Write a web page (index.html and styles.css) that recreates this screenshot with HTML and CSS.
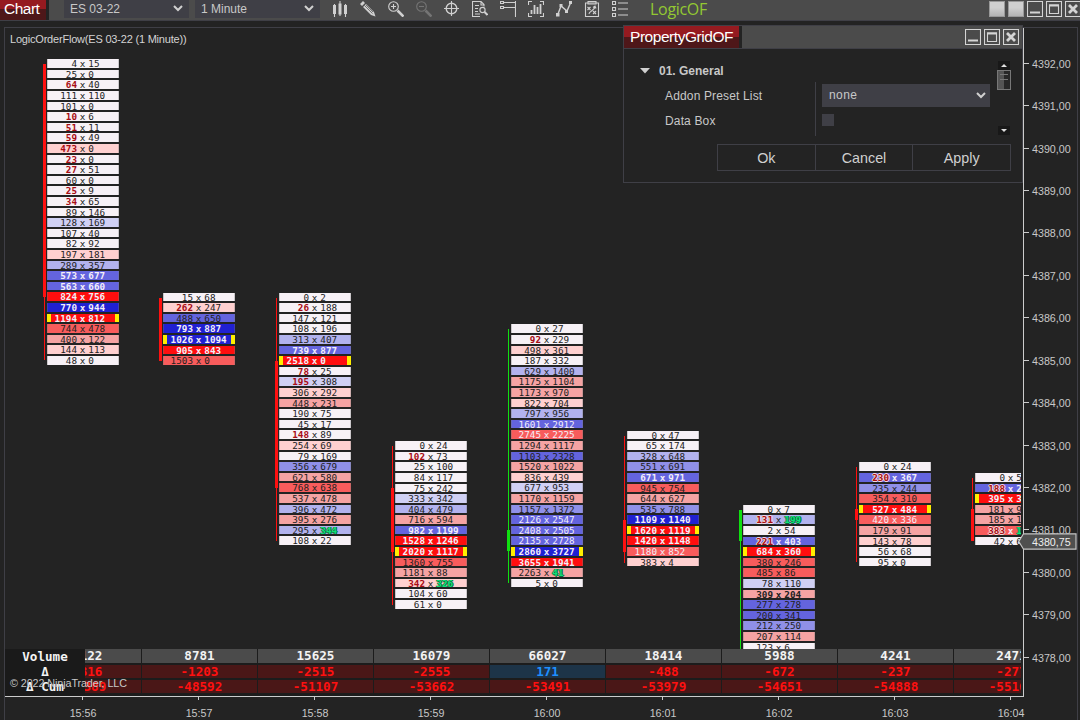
FILE: index.html
```html
<!DOCTYPE html>
<html lang="en">
<head>
<meta charset="utf-8">
<title>Chart</title>
<link rel="stylesheet" href="styles.css">
</head>
<body>
<header class="toolbar">
  <div class="tab tab-chart">Chart</div>
  <div class="tools">
    <div class="select"><span>ES 03-22</span><svg width="10" height="7" viewBox="0 0 10 7"><path d="M1 1l4 4 4-4" class="chev"/></svg></div>
    <div class="select"><span>1 Minute</span><svg width="10" height="7" viewBox="0 0 10 7"><path d="M1 1l4 4 4-4" class="chev"/></svg></div>
    <nav class="icons">
      <svg viewBox="0 0 16 16"><path class="f" d="M1 4h3v9H1zM6.500 2.500h3v11h-3zM12 4h3v9h-3z"/><path d="M2.500 3v13M8 0v15M13.500 3v13"/></svg>
      <svg viewBox="0 0 16 16"><path class="f" d="M0 3l3-3 2 2-3 3zM3 6l3-3 8 8 1.500 4.500L11 14z"/><path d="M4.500 4.500l8 8M6 4l7 7" stroke="#4b4b4b" stroke-width=".7"/></svg>
      <svg viewBox="0 0 16 16"><circle cx="5.500" cy="5.500" r="4.800"/><path d="M3 5.500h5M5.500 3v5"/><path d="M9.500 9.500l6 6" stroke-width="2.600"/></svg>
      <svg viewBox="0 0 16 16" class="off"><circle cx="5.500" cy="5.500" r="4.800"/><path d="M3 5.500h5"/><path d="M9.500 9.500l6 6" stroke-width="2.600"/></svg>
      <svg viewBox="0 0 16 16"><circle cx="7.500" cy="7.500" r="5.300" stroke-width="1.400"/><path d="M7.500 0v15M0 7.500h15"/></svg>
      <svg viewBox="0 0 16 16"><path d="M8 15.500H.5V.5H9l3 3v2M9 .5V4h3M3 4.500h4M3 7.500h3M3 10.500h3M3 13h5"/><circle cx="10.500" cy="9" r="2.600"/><path d="M12.500 11l3 3" stroke-width="2"/></svg>
      <svg viewBox="0 0 16 16"><path d="M.5.5h3v2h-3zM.5 5.500h3v2h-3zM3.500 1.500h12M3.500 6.500h12M15.500 0v16"/></svg>
      <svg viewBox="0 0 16 16"><path d="M4 .5H.5V4M12 .5h3.500V4M4 15.500H.5V12M12 15.500h3.500V12"/><path d="M3.500 9v4M6.500 4v9M9.500 6v7M12.500 3v10" stroke-width="1.800"/></svg>
      <svg viewBox="0 0 16 16"><path d="M2 13L5 5l6 5 3.500-8" stroke-width="1.400"/><path class="f" d="M0 12h3.500v3.500H0zM3.500 3h3v3h-3zM9 9h3v3H9zM13 0h3v3h-3z"/></svg>
      <svg viewBox="0 0 16 16"><path d="M1.500 2h13v13.500h-13z"/><path d="M4 .5h8V3H4zM3.500 6l3 3m0-3l-3 3M9 13l3-3m-3 0l3 3M5 13c0-3 5-3 6-7M9 6.500l2-1.500 1 2.500"/></svg>
      <svg viewBox="0 0 16 16"><path d="M.5.5h3v3h-3zM.5 6.500h3v3h-3zM.5 12.500h3v3h-3zM6 2h10M6 8h10M6 14h10"/></svg>
    </nav>
    <span class="logic">LogicOF</span>
    <div class="winbtns">
      <i class="blank"></i><i class="blank"></i>
      <svg viewBox="0 0 16 16"><path d="M.5.5h15v15H.5z"/><path d="M3 11.500h10" stroke-width="2"/></svg>
      <svg viewBox="0 0 16 16"><path d="M.5.5h15v15H.5zM3.500 4h9v8.500h-9z"/><path d="M3 4.500h10" stroke-width="2"/></svg>
      <svg viewBox="0 0 16 16"><path d="M.5.5h15v15H.5z"/><path d="M4 4l8 8m0-8l-8 8" stroke-width="2.800"/></svg>
    </div>
  </div>
</header>

<main class="frame">
  <section class="plot">
    <div class="indicator">LogicOrderFlow(ES 03-22 (1 Minute))</div>
    <div class="ladders" id="ladders"></div>
    <div class="summary">
      <div class="labels"><b>Volume</b><b>Δ</b><b>Δ Cum</b></div>
      <div class="cells" id="cells"></div>
    </div>
    <div class="copyright">© 2022 NinjaTrader, LLC</div>
  </section>
  <aside class="prices" id="prices"></aside>
  <footer class="times" id="times"></footer>
</main>

<div class="marker"><svg width="59" height="17" viewBox="0 0 59 17"><path d="M.8 8.500L5.500.8H58v15.400H5.500z"/></svg><span>4380,75</span></div>

<section class="dialog">
  <div class="dlg-head">
    <div class="tab tab-dlg">PropertyGridOF</div>
    <div class="dlg-bar">
      <svg viewBox="0 0 16 16"><path d="M.5.5h15v15H.5z"/><path d="M3 11.500h10" stroke-width="2"/></svg>
      <svg viewBox="0 0 16 16"><path d="M.5.5h15v15H.5zM3.500 4h9v8.500h-9z"/><path d="M3 4.500h10" stroke-width="2"/></svg>
      <svg viewBox="0 0 16 16"><path d="M.5.5h15v15H.5z"/><path d="M4 4l8 8m0-8l-8 8" stroke-width="2.800"/></svg>
    </div>
  </div>
  <div class="dlg-body">
    <div class="props">
      <h2><svg width="10" height="6" viewBox="0 0 10 6"><path d="M0 0h10L5 5.500z"/></svg>01. General</h2>
      <div class="prop"><label>Addon Preset List</label><div class="value"><div class="combo"><span>none</span><svg width="10" height="7" viewBox="0 0 10 7"><path d="M1 1l4 4 4-4" class="chev"/></svg></div></div></div>
      <div class="prop"><label>Data Box</label><div class="value"><i class="check"></i></div></div>
    </div>
    <div class="scroll"><i class="arrow up"></i><i class="thumb"></i><i class="arrow down"></i></div>
  </div>
  <div class="buttons"><button>Ok</button><button>Cancel</button><button>Apply</button></div>
</section>
<script src="chart.js"></script>
</body>
</html>
```
FILE: styles.css
```css
* { box-sizing: border-box; }
body {
  margin: 0; width: 1080px; height: 720px; overflow: hidden; position: relative;
  background: #232323; color: #c8c8c8; font-family: "Liberation Sans", Arial, sans-serif;
}
svg { display: block; flex: none; }
.chev { fill: none; stroke: #d0d0d0; stroke-width: 2; }

.toolbar { display: flex; gap: 3px; height: 21px; border-bottom: 1px solid #3f3f46; }
.tab { color: #fff; background: linear-gradient(#951a20 0 50%, #4e1719 50%); white-space: nowrap; }
.tab-chart { width: 46px; height: 20px; padding-left: 4px; font-size: 15.500px; letter-spacing: -.5px; line-height: 18px; background: linear-gradient(#951a20 0 9px, #4e1719 9px); }
.tools { flex: 1; display: flex; background: #4b4b4b; padding-left: 15px; }
.select {
  width: 125px; height: 18px; margin-right: 6px; padding: 0 6px 0 6px; background: #3f3f46;
  display: flex; align-items: center; justify-content: space-between; font-size: 12px;
}
.select svg { margin-top: -2px; }
.icons { display: flex; gap: 12px; margin: 1px 0 0 6px; }
.icons svg { width: 16px; height: 16px; fill: none; stroke: #d0d0d0; stroke-width: 1.1; }
.icons .f { fill: #d0d0d0; stroke: none; }
.icons .off { stroke: #757575; }
.logic { margin-left: 22px; font: 16px/18px "Open Sans", "Noto Sans", sans-serif; color: #93c832; width: 60px; letter-spacing: -.3px; }
.winbtns { display: flex; gap: 3px; margin: 1px -1px 0 auto; }
.winbtns svg, .dlg-bar svg { width: 16px; height: 16px; fill: none; stroke: #d4d4d4; stroke-width: 1.1; }
.blank { width: 16px; height: 16px; background: linear-gradient(#d0d0d0 0 40%, #b4b4b4); border: 1px solid #999; }

.frame {
  margin: 6px 2px 0 4px; height: 693px; border: 1px solid #3f3f46; border-bottom: 0;
  display: grid; grid-template: 669px 23px / 1019px 53px;
}
.plot { display: grid; grid-template: 669px / 1019px; border-right: 1px solid #ccc; border-bottom: 1px solid #ccc; overflow: hidden; }
.plot > * { grid-area: 1 / 1; }
.indicator { font-size: 11px; line-height: 14px; padding: 4px 0 0 5px; white-space: nowrap; letter-spacing: -.2px; color: #d4d4d4; }
.ladders { display: flex; width: 1016px; padding: 31.300px 0 0 20px; overflow: hidden; }
.ladder { flex: 0 0 116px; display: flex; align-items: flex-start; padding-left: 18px; }
.candle { margin-right: 1px; }
.rows { width: 72px; }
.row { height: 10.609px; }
.cell {
  height: 8.600px; display: grid; grid-template-columns: 29px 11.300px 1fr; align-items: center;
  border: solid rgba(120,120,120,.35); border-width: 0 1px; overflow: hidden;
  font: 9.300px/9px "DejaVu Sans Mono", monospace; color: #222;
}
.cell span:first-child { justify-self: end; }
.cell span:nth-child(2) { justify-self: center; }
.cell.poc { border: solid #ffee00; border-width: 0 4px; grid-template-columns: 26px 11.300px 1fr; }
.c0 { background: #f7f1f6; }
.r1 { background: #ffd0d0; } .r2 { background: #f5a3a3; } .r3 { background: #f85c5c; } .r4 { background: #ff0e0e; }
.b1 { background: #d0d0f4; } .b2 { background: #b2b2ee; } .b3 { background: #9090e8; } .b4 { background: #6464de; } .b5 { background: #2020d2; }
.cell.w { color: #f3eef8; }
.bold { font-weight: bold; }
.cell .sell { color: #a80c14; font-weight: bold; }
.cell.w .sell, .b2 .sell { text-shadow: 1px 0 #f4dcdc, -1px 0 #f4dcdc, 0 1px #f4dcdc, 0 -1px #f4dcdc; }
.cell .buy { color: #10e078; font-weight: bold; text-shadow: 1px 0 #0a6a3c, -1px 0 #0a6a3c, 0 1px #0a6a3c; }

.summary { align-self: end; height: 48px; display: grid; grid-template: 48px / 1016px; background: #1c1c1c; width: 1016px; overflow: hidden; font: bold 12.600px/15px "DejaVu Sans Mono", monospace; }
.summary > * { grid-area: 1 / 1; }
.labels { z-index: 1; width: 80px; background: #1a1a1a; color: #f3f3f3; display: grid; grid-template-rows: 15px 15px 15px; align-content: start; text-align: center; }
.cells { display: flex; padding-left: 21px; }
.col { flex: 0 0 116px; display: grid; grid-template-rows: 14px 13px 13px; row-gap: 2px; align-content: start; border-right: 1px solid #1c1c1c; text-align: center; }
.col span { background: #4b4b4b; color: #f3f3f3; line-height: 14px; }
.col .neg { background: #4a1717; color: #ff1010; line-height: 13px; }
.col .pos { background: #1d3448; color: #1e90ff; line-height: 13px; }
.copyright { align-self: end; z-index: 2; padding: 0 0 7px 5px; font-size: 10.800px; line-height: 14px; letter-spacing: -.1px; }

.prices { font-size: 10.700px; padding-top: 14.800px; overflow: hidden; margin-bottom: -10px; }
.price { height: 42.430px; display: flex; align-items: flex-start; gap: 3px; line-height: 15px; padding-top: 14px; }
.price::before { content: ""; width: 5px; height: 1px; margin-top: 6px; background: #ccc; }
.prices .price { margin-top: 0; }
.times { grid-column: 1 / 3; display: flex; padding-left: 20px; font-size: 10.700px; overflow: hidden; }
.time { flex: 0 0 116px; display: flex; flex-direction: column; align-items: center; line-height: 14px; gap: 6px; }
.time::before { content: ""; width: 1px; height: 5px; margin-left: -1px; background: #ccc; }

.marker { position: absolute; left: 1018px; top: 533px; display: grid; font-size: 10.700px; line-height: 18px; color: #eee; }
.marker > * { grid-area: 1 / 1; }
.marker svg { fill: #4f4f4f; stroke: #c4c4c4; stroke-width: 1.200; }
.marker span { padding-left: 14px; }

.dialog { position: absolute; left: 623px; top: 25px; width: 400px; height: 158px; background: #232323; border: 1px solid #3f3f46; }
.dlg-head { display: flex; gap: 3px; height: 23px; border-bottom: 1px solid #3f3f46; }
.tab-dlg { flex: none; width: 115px; padding-left: 6px; font-size: 15.500px; line-height: 22px; letter-spacing: -.45px; }
.dlg-bar { flex: 1; background: #4b4b4b; display: flex; justify-content: flex-end; align-items: center; gap: 3px; padding-right: 3px; }
.dlg-body { display: flex; height: 95px; padding-top: 11px; }
.props { width: 366px; }
.props h2 { margin: 0; padding-left: 16px; height: 22px; display: flex; align-items: center; gap: 9px; font-size: 12px; line-height: 22px; }
.props h2 svg { fill: #d0d0d0; }
.prop { height: 26px; display: flex; align-items: center; font-size: 12px; }
.prop + .prop { height: 28px; padding-bottom: 4px; }
.prop label { width: 150px; padding: 2px 0 0 41px; letter-spacing: .15px; white-space: nowrap; }
.value { margin-left: 41px; align-self: stretch; border-left: 1px solid #3f3f46; padding-left: 6px; display: flex; align-items: center; }
.prop + .prop .value { margin-bottom: -4px; padding-bottom: 4px; }
.combo { width: 168px; height: 23px; padding: 0 4px 0 7px; background: #3f3f46; display: flex; align-items: center; justify-content: space-between; letter-spacing: .4px; line-height: 25px; }
.check { width: 12px; height: 12px; background: #3f3f46; }
.scroll { width: 14px; margin-left: 7px; display: flex; flex-direction: column; align-items: center; padding-top: 1px; }
.arrow { width: 12px; height: 9px; background: #181818; display: grid; place-items: center; }
.arrow::before { content: ""; border: 3px solid transparent; }
.up::before { border-top: 0; border-bottom-color: #e0e0e0; }
.down { margin-top: auto; margin-bottom: 9px; }
.down::before { border-bottom: 0; border-top-color: #e0e0e0; }
.thumb { width: 14px; height: 20px; border: 1px solid #777; background: linear-gradient(90deg, #555 50%, #282828 50%); padding: 3px 2px; }
.thumb::before { content: ""; display: block; height: 4px; border: solid #777; border-width: 1px 0; }
.buttons { display: flex; margin-left: 93px; width: 294px; }
.buttons button { flex: 1; height: 27px; margin-left: -1px; background: #232323; border: 1px solid #3f3f46; color: #d0d0d0; font: 14.300px "Liberation Sans", Arial, sans-serif; padding: 0; }
.buttons button:first-child { margin-left: 0; }
```
FILE: chart.js
```js
// Row format: "bid ask shade flags"; flags: w light text, b bold, p point of control, s sell imbalance, g buy imbalance
const TICK = 10.607;
const bars = [
  { time: '15:56', top: 0, wick: [0, 28], body: [0, 22], color: '#ff1010', sum: ['28122', '-1316', '-47389'],
    rows: '4 15 c0|25 0 c0|64 40 c0 s|111 110 c0|101 0 c0|10 6 c0 s|51 11 c0 s|59 49 c0 s|473 0 r1 s|23 0 c0 s|27 51 c0 s|60 0 c0|25 9 c0 s|34 65 c0 s|89 146 c0|128 169 b1|107 40 c0|82 92 c0|197 181 r1|289 357 b2|573 677 b4 wb|563 660 b4 wb|824 756 r4 wb|770 944 b5 wb|1194 812 r4 wbp|744 478 r3|400 122 r2|144 113 r1|48 0 c0' },
  { time: '15:57', top: 22, wick: [22, 28], body: [22, 28], color: '#ff1010', sum: ['8781', '-1203', '-48592'],
    rows: '15 68 c0|262 247 r1 s|488 650 b4|793 887 b5 wb|1026 1094 b5 wbp|905 843 r4 wb|1503 0 r3' },
  { time: '15:58', top: 22, wick: [22, 45], body: [28, 40], color: '#ff1010', sum: ['15625', '-2515', '-51107'],
    rows: '0 2 c0|26 188 c0 s|147 121 c0|108 196 c0|313 407 b2|739 877 b4 wb|2518 0 r4 wbp|78 25 c0 s|195 308 b1 s|306 292 r1|448 231 r2|190 75 c0|45 17 c0|148 89 c0 s|254 69 r1|79 169 c0|356 679 b3|621 580 r2|768 638 r3|537 478 r2|396 472 b2|395 276 r2|295 344 b2 g|108 22 c0' },
  { time: '15:59', top: 36, wick: [36, 51], body: [40, 46], color: '#ff1010', sum: ['16079', '-2555', '-53662'],
    rows: '0 24 c0|102 73 c0 s|25 100 c0|84 117 c0|75 242 c0|333 342 b1|404 479 b2|716 594 r2|982 1199 b4 wb|1528 1246 r4 wb|2020 1117 r4 wbp|1360 755 r3|1181 88 r2|342 326 r1 sg|104 60 c0|61 0 c0' },
  { time: '16:00', top: 25, wick: [25, 49], body: [44, 46], color: '#10e010', sum: ['66027', '171', '-53491'],
    rows: '0 27 c0|92 229 c0 s|498 361 r1|187 332 c0|629 1400 b2|1175 1104 r2|1173 970 r2|822 704 r1|797 956 b2|1601 2912 b4 w|2745 2225 r3 w|1294 1117 r2|1103 2328 b4|1520 1022 r2|836 439 r1|677 953 b1|1170 1159 r2|1157 1372 b3|2126 2547 b4 w|2408 2505 b4 w|2135 2728 b4 w|2860 3727 b5 wbp|3655 1941 r4 wb|2263 41 r2 g|5 0 c0' },
  { time: '16:01', top: 35, wick: [35, 47], body: [43, 46], color: '#ff1010', sum: ['18414', '-488', '-53979'],
    rows: '0 47 c0|65 174 c0|328 648 b2|551 691 b3|671 971 b4 wb|945 754 r3|644 627 r2|535 788 b3|1109 1140 b5 wb|1620 1119 r4 wbp|1420 1148 r4 wb|1180 852 r3 w|383 4 r1' },
  { time: '16:02', top: 42, wick: [42, 56], body: [42, 45], color: '#10e010', sum: ['5988', '-672', '-54651'],
    rows: '0 7 c0|131 199 b2 sg|2 54 c0|221 403 b4 wbs|684 360 r4 wbp|380 246 r3|485 86 r3|78 110 b1|309 204 r2 b|277 278 b4|200 341 b4|212 250 b3|207 114 r2|123 6 c0' },
  { time: '16:03', top: 38, wick: [38, 47], body: [42, 43], color: '#ff1010', sum: ['4241', '-237', '-54888'],
    rows: '0 24 c0|230 367 b4 wbs|235 244 b3|354 310 r3|527 484 r4 wbp|420 336 r3 w|179 91 r2|143 78 r1|56 68 c0|95 0 c0' },
  { time: '16:04', top: 39, wick: [39, 45], body: [42, 45], color: '#ff1010', sum: ['2471', '-277', '-55165'],
    rows: '0 5 c0|188 2 b4 wbs|395 3 r4 wbp|181 9 r2|185 1 r2|383 1 r3 wbsg|42 6 c0' }
];

function ladderRow(text) {
  const [bid, ask, shade, flags = ''] = text.split(' ');
  const cls = ['cell', shade];
  if (flags.includes('w')) cls.push('w');
  if (flags.includes('b')) cls.push('bold');
  if (flags.includes('p')) cls.push('poc');
  return `<div class="row"><div class="${cls.join(' ')}"><span${flags.includes('s') ? ' class="sell"' : ''}>${bid}</span><span>x</span><span${flags.includes('g') ? ' class="buy"' : ''}>${ask}</span></div></div>`;
}

function candle(bar) {
  const y = k => Math.round(4.5 + (k - bar.top) * TICK);
  const rect = (x, w, [a, b]) => `<rect x="${x}" y="${y(a)}" width="${w}" height="${y(b) - y(a)}" fill="${bar.color}"/>`;
  return `<svg class="candle" width="3" height="${y(bar.wick[1]) + 1}">${rect(1, 1, bar.wick)}${rect(0, 3, bar.body)}</svg>`;
}

document.getElementById('ladders').innerHTML = bars.map(bar =>
  `<div class="ladder" style="padding-top:${bar.top * TICK}px">${candle(bar)}<div class="rows">${bar.rows.split('|').map(ladderRow).join('')}</div></div>`).join('');

document.getElementById('cells').innerHTML = bars.map(({ sum: [vol, delta, cum] }) =>
  `<div class="col"><span>${vol}</span><span class="${delta < 0 ? 'neg' : 'pos'}">${delta}</span><span class="neg">${cum}</span></div>`).join('');

document.getElementById('times').innerHTML = bars.map(bar => `<div class="time">${bar.time}</div>`).join('');

let prices = '';
for (let p = 4392; p >= 4378; p--) prices += `<div class="price">${p},00</div>`;
document.getElementById('prices').innerHTML = prices;
```
